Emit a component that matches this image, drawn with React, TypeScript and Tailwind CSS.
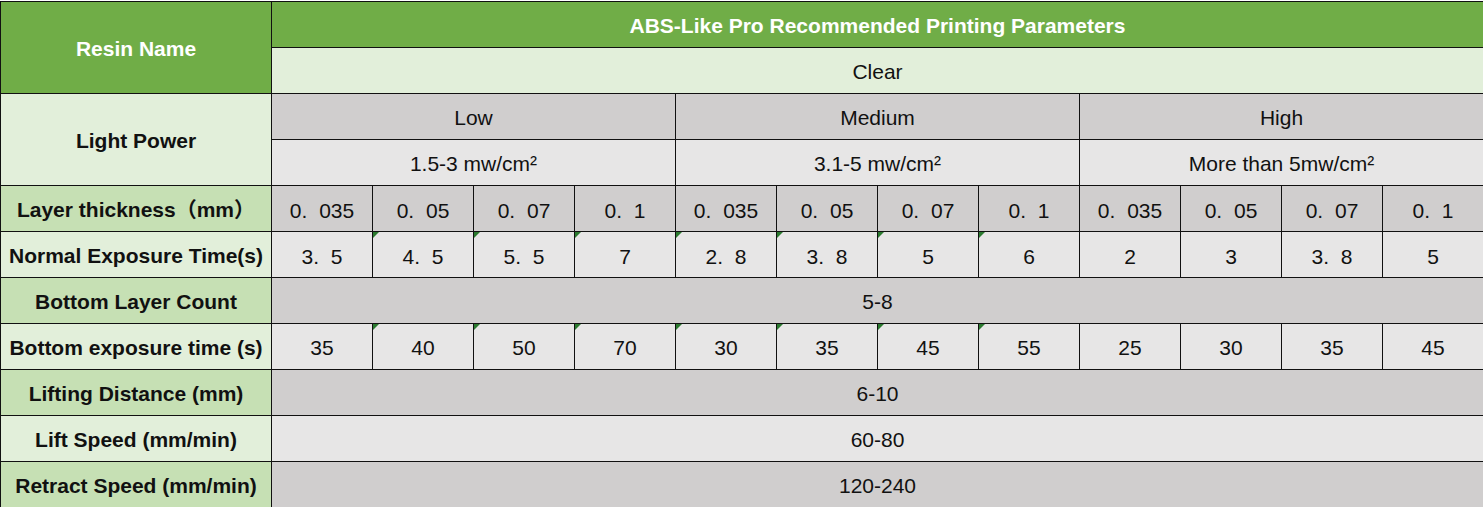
import React from "react";

type Cell = {
  text: string;
  cls: string;
  tri?: boolean;
  num?: boolean;
};

const DG = "bg-[#70ad47] text-white font-bold";
const LG = "bg-[#e2efda]";
const MG = "bg-[#c6e0b4]";
const GR = "bg-[#d0cece]";
const LY = "bg-[#e7e6e6]";

const thick = ["0. 035", "0. 05", "0. 07", "0. 1"];
const normal = ["3. 5", "4. 5", "5. 5", "7", "2. 8", "3. 8", "5", "6", "2", "3", "3. 8", "5"];
const bottom = ["35", "40", "50", "70", "30", "35", "45", "55", "25", "30", "35", "45"];

const cells: Cell[] = [
  { text: "Resin Name", cls: `${DG} row-span-2` },
  { text: "ABS-Like Pro Recommended Printing Parameters", cls: `${DG} col-span-12` },
  { text: "Clear", cls: `${LG} col-span-12` },
  { text: "Light Power", cls: `${LG} row-span-2 font-bold` },
  { text: "Low", cls: `${GR} col-span-4` },
  { text: "Medium", cls: `${GR} col-span-4` },
  { text: "High", cls: `${GR} col-span-4` },
  { text: "1.5-3 mw/cm²", cls: `${LY} col-span-4` },
  { text: "3.1-5 mw/cm²", cls: `${LY} col-span-4` },
  { text: "More than 5mw/cm²", cls: `${LY} col-span-4` },
  { text: "Layer thickness（mm）", cls: `${MG} font-bold` },
  ...[...thick, ...thick, ...thick].map((t) => ({ text: t, cls: GR, num: true })),
  { text: "Normal Exposure Time(s)", cls: `${LG} font-bold` },
  ...normal.map((t, i) => ({ text: t, cls: LY, num: true, tri: i >= 1 && i <= 7 })),
  { text: "Bottom Layer Count", cls: `${MG} font-bold` },
  { text: "5-8", cls: `${GR} col-span-12` },
  { text: "Bottom exposure time (s)", cls: `${LG} font-bold` },
  ...bottom.map((t, i) => ({ text: t, cls: LY, tri: i >= 1 && i <= 7 })),
  { text: "Lifting Distance (mm)", cls: `${MG} font-bold` },
  { text: "6-10", cls: `${GR} col-span-12` },
  { text: "Lift Speed (mm/min)", cls: `${LG} font-bold` },
  { text: "60-80", cls: `${LY} col-span-12` },
  { text: "Retract Speed (mm/min)", cls: `${MG} font-bold` },
  { text: "120-240", cls: `${GR} col-span-12` },
];

export default function App() {
  return (
    <div className="w-[1483px] h-[507px] overflow-hidden bg-white pt-px">
      <div
        className="grid grid-cols-[270px_repeat(12,100px)] grid-rows-[repeat(11,45px)] gap-px bg-[#111111] pl-px pt-px text-[21px] leading-none text-[#111111]"
        style={{ fontFamily: '"Liberation Sans", Arial, "Noto Sans CJK SC", sans-serif' }}
      >
        {cells.map((c, i) => (
          <div key={i} className={`relative flex items-center justify-center whitespace-pre pt-px ${c.cls}`}>
            {c.tri && (
              <svg className="absolute left-0 top-0" width="6" height="6" viewBox="0 0 6 6">
                <polygon points="0,0 6,0 0,6" fill="#2b7a2f" />
              </svg>
            )}
            <span className={c.num ? "pt-[2px] [word-spacing:6px]" : ""}>{c.text}</span>
          </div>
        ))}
      </div>
    </div>
  );
}
